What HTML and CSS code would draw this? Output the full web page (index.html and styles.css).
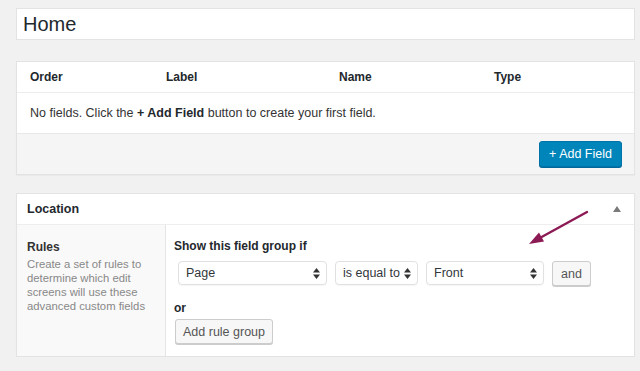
FILE: index.html
```html
<!doctype html>
<html>
  <head>
    <meta charset="utf-8">
    <title>Edit Field Group</title>
    <link rel="stylesheet" href="styles.css">
  </head>
  <body>
    <div class="wrap">
      <div class="title-box">Home</div>

      <div class="postbox fields">
        <div class="fields-head">
          <span>Order</span>
          <span>Label</span>
          <span>Name</span>
          <span>Type</span>
        </div>
        <div class="fields-empty">
          No fields. Click the <b>+ Add Field</b> button to create your first field.
        </div>
        <div class="fields-foot">
          <button class="btn-primary">+ Add Field</button>
        </div>
      </div>

      <div class="postbox location">
        <div class="box-head">
          <h2>Location</h2>
          <svg class="toggle" width="8" height="6" viewBox="0 0 8 6"><path d="M0 6 L4 0 L8 6 Z" fill="#7a7a7a"/></svg>
        </div>
        <div class="rules">
          <div class="rules-label">
            <h3>Rules</h3>
            <p>Create a set of rules to determine which edit screens will use these advanced custom fields</p>
          </div>
          <div class="rules-input">
            <h4>Show this field group if</h4>
            <div class="rule-row">
              <div class="select sel-param">Page
                <svg width="7" height="11" viewBox="0 0 7 11"><path d="M0 4.5 L3.5 0 L7 4.5 Z M0 6.5 L3.5 11 L7 6.5 Z" fill="#333"/></svg>
              </div>
              <div class="select sel-op">is equal to
                <svg width="7" height="11" viewBox="0 0 7 11"><path d="M0 4.5 L3.5 0 L7 4.5 Z M0 6.5 L3.5 11 L7 6.5 Z" fill="#333"/></svg>
              </div>
              <div class="select sel-value">Front
                <svg width="7" height="11" viewBox="0 0 7 11"><path d="M0 4.5 L3.5 0 L7 4.5 Z M0 6.5 L3.5 11 L7 6.5 Z" fill="#333"/></svg>
              </div>
              <button class="btn btn-and">and</button>
            </div>
            <h4 class="or">or</h4>
            <button class="btn btn-group">Add rule group</button>
          </div>
        </div>
      </div>
    </div>

    <svg class="pointer" width="640" height="371" viewBox="0 0 640 371">
      <line x1="587" y1="212" x2="538" y2="239" stroke="#8c1b55" stroke-width="2.4" stroke-linecap="round"/>
      <path d="M529 244 L539 232.6 L544 241.4 Z" fill="#8c1b55"/>
    </svg>
  </body>
</html>
```

FILE: styles.css
```css
html, body { margin: 0; padding: 0; }
body {
  background: #f1f1f1;
  font-family: "Liberation Sans", Arial, sans-serif;
  color: #444;
  font-size: 12px;
  position: relative;
}
.wrap { padding: 8px 5px 0 16px; }

.title-box {
  height: 30px;
  background: #fff;
  border: 1px solid #e3e3e3;
  font-size: 20px;
  color: #23282d;
  line-height: 30px;
  padding-left: 6px;
}

.postbox {
  background: #fff;
  border: 1px solid #e3e3e3;
  box-shadow: 0 1px 1px rgba(0,0,0,.03);
}
.fields { margin-top: 21px; }
.fields-head {
  display: grid;
  grid-template-columns: 136px 173px 155px 1fr;
  align-items: center;
  height: 30px;
  padding: 0 13px;
  border-bottom: 1px solid #ececec;
  font-weight: bold;
  color: #23282d;
}
.fields-empty {
  height: 40px;
  line-height: 40px;
  padding: 0 13px;
  color: #333;
  font-size: 12.5px;
  border-bottom: 1px solid #e8e8e8;
}
.fields-empty b { color: #23282d; }
.fields-foot {
  background: #f5f5f5;
  height: 40px;
  display: flex;
  justify-content: flex-end;
  align-items: center;
  padding: 0 12px;
}
.btn-primary {
  height: 26px;
  width: 83px;
  background: #0085ba;
  border: 1px solid #0073aa;
  border-radius: 3px;
  color: #fff;
  font: 12.5px "Liberation Sans", Arial, sans-serif;
  box-shadow: 0 1px 0 #006799;
  padding: 0;
}

.location { margin-top: 18px; }
.box-head {
  height: 30px;
  display: flex;
  align-items: center;
  justify-content: space-between;
  padding: 0 13px 0 10px;
  border-bottom: 1px solid #eee;
}
.box-head h2 {
  margin: 0;
  font-size: 12.5px;
  color: #23282d;
}
.toggle { margin-top: -1px; }

.rules { display: flex; }
.rules-label {
  width: 138px;
  flex: none;
  background: #f9f9f9;
  border-right: 1px solid #e5e5e5;
  padding: 15px 0 0 10px;
}
.rules-label h3 {
  margin: 0;
  font-size: 12px;
  line-height: 14px;
  color: #333;
}
.rules-label p {
  margin: 3px 0 0;
  color: #888;
  font-size: 11.3px;
  line-height: 14px;
}
.rules-input {
  flex: 1;
  padding: 14px 0 12px 8px;
}
.rules-input h4 {
  margin: 0;
  font-size: 12px;
  line-height: 14px;
  color: #23282d;
}
.rule-row {
  display: flex;
  gap: 8px;
  margin-top: 8px;
  margin-left: 4px;
}
.select {
  height: 22px;
  border: 1px solid #e1e1e1;
  border-radius: 4px;
  background: #fff;
  display: flex;
  align-items: center;
  justify-content: space-between;
  padding: 0 6px 0 7px;
  font-size: 12.5px;
  color: #32373c;
  box-shadow: 0 1px 1px rgba(0,0,0,.04);
}
.sel-param { width: 134px; }
.sel-op { width: 68px; }
.sel-value { width: 103px; }
.btn {
  height: 25px;
  border: 1px solid #ccc;
  border-radius: 3px;
  background: #f7f7f7;
  box-shadow: 0 1px 0 #ccc;
  color: #555;
  font: 12.5px "Liberation Sans", Arial, sans-serif;
  padding: 0 8px;
}
.btn-group { margin-left: 1px; padding: 0 7px; }
.rules-input h4.or { margin-top: 15px; margin-bottom: 4px; }

.pointer { position: absolute; top: 0; left: 0; pointer-events: none; }
```
